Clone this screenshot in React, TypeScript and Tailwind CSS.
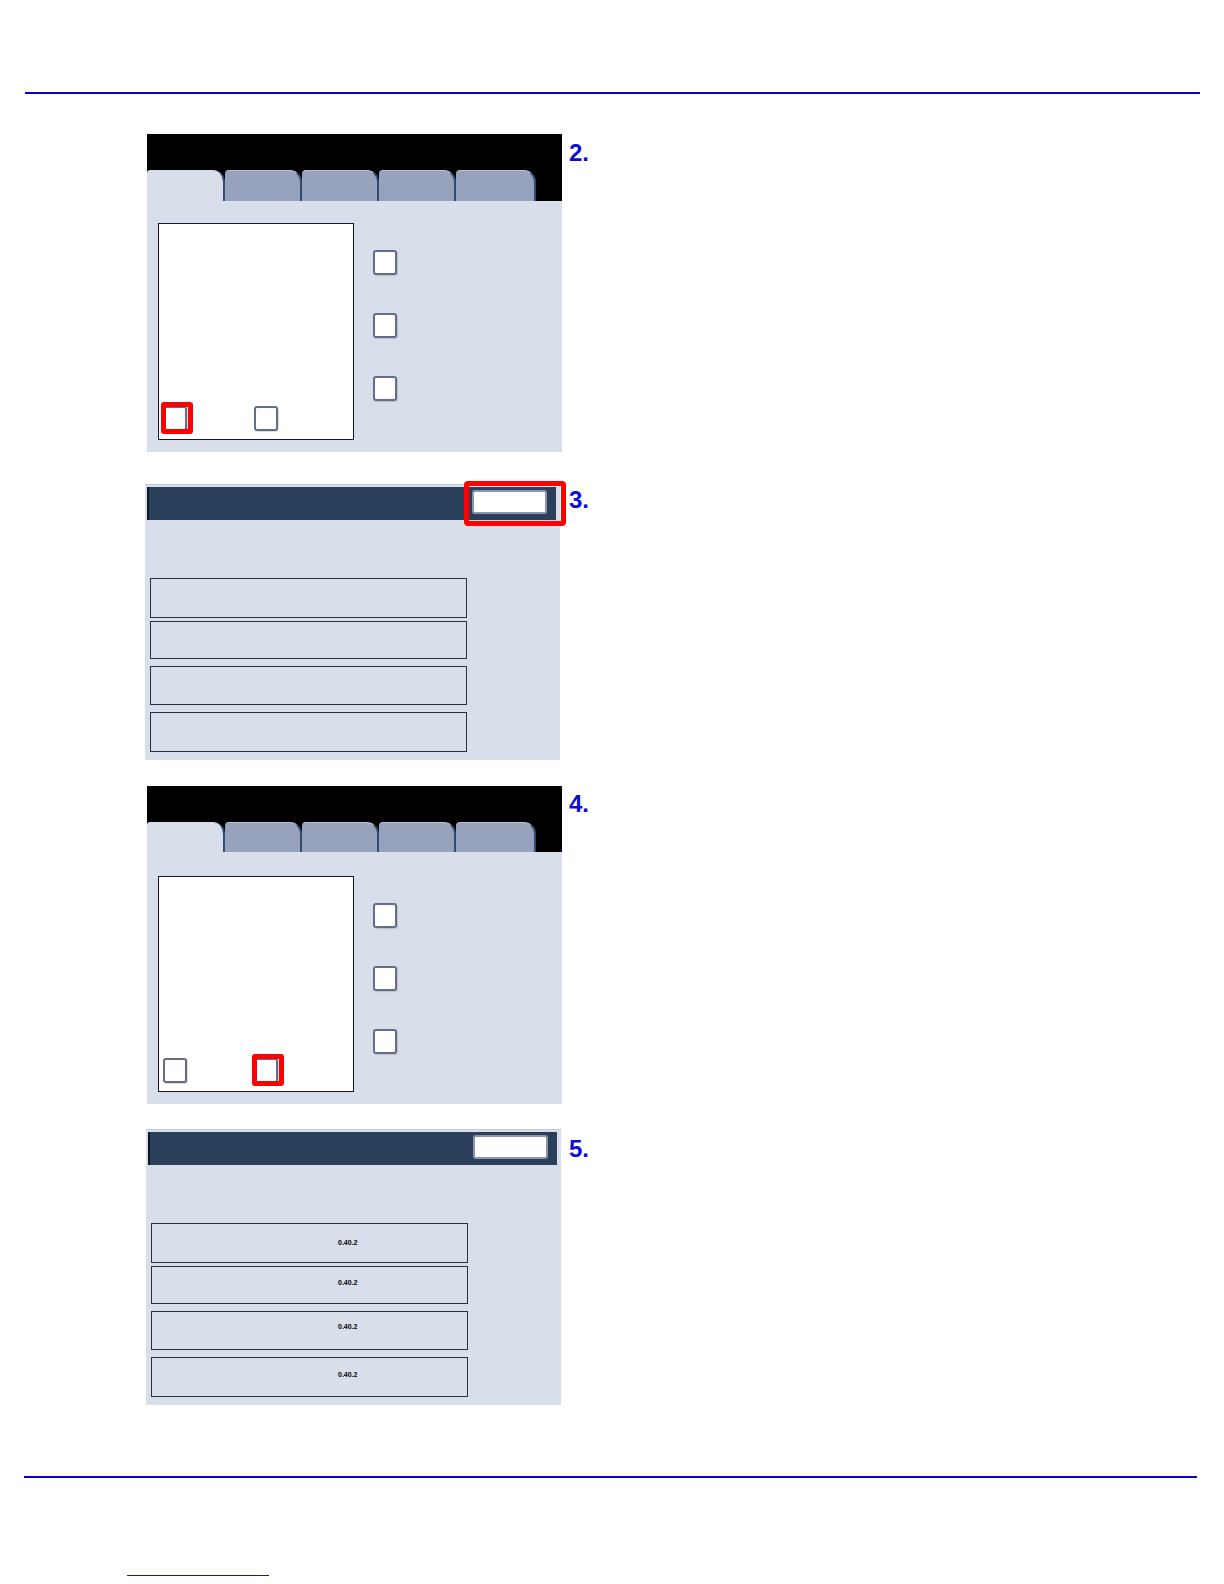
import React from "react";

type Side = "left" | "right";

const Checkbox = ({ marked = false }: { marked?: boolean }) => (
  <div className="relative w-[24px] h-[25px]">
    <div className="w-full h-full rounded-[3px] border-2 border-[#656d8c] bg-white shadow-[1px_1px_1px_rgba(0,0,0,0.15)]" />
    {/* Red call-out drawn over the checkbox */}
    {marked && (
      <div className="absolute -left-[2px] -top-[4px] w-[32px] h-[32px] rounded-[3px] border-[5px] border-[#ff0000]" />
    )}
  </div>
);

const tabClasses = ["w-[77px]", "w-[77px]", "w-[77px]", "w-[80px]"];

interface TabPanelProps {
  tabH: string;
  bodyH: string;
  boxTop: string;
  boxH: string;
  marked: Side;
}

const TabPanel = ({ tabH, bodyH, boxTop, boxH, marked }: TabPanelProps) => (
  <div className="w-[415px] bg-black pt-[36px]">
    {/* Tab strip */}
    <div className={`flex ${tabH}`}>
      <div className="w-[78px] h-full bg-[#d8deea] rounded-tl-[3px] rounded-tr-[12px] border-r-2 border-[#2f4d75]" />
      {tabClasses.map((w, i) => (
        <div
          key={i}
          className={`${w} h-full bg-[#97a2bc] rounded-tl-[4px] rounded-tr-[12px] border-t border-[#b9c2d4] border-r-2 border-r-[#2f4d75]`}
        />
      ))}
    </div>

    {/* Body */}
    <div className={`flex bg-[#d8deea] pl-[11px] ${bodyH} ${boxTop}`}>
      <div className={`w-[196px] ${boxH} bg-white border border-[#14143c] flex items-end gap-[67px] pl-[4px] pb-[8px]`}>
        <Checkbox marked={marked === "left"} />
        <Checkbox marked={marked === "right"} />
      </div>
      <div className="ml-[19px] mt-[27px] flex flex-col gap-[38px]">
        <Checkbox />
        <Checkbox />
        <Checkbox />
      </div>
    </div>
  </div>
);

const rows = [
  { h: "h-[40px]", mt: "mt-0", pb: "pb-[2px]" },
  { h: "h-[38px]", mt: "mt-[3px]", pb: "pb-[5px]" },
  { h: "h-[39px]", mt: "mt-[7px]", pb: "pb-[8px]" },
  { h: "h-[40px]", mt: "mt-[7px]", pb: "pb-[5px]" },
];

const HeaderPanel = ({ marked = false, label }: { marked?: boolean; label?: string }) => (
  <div className="relative w-[415px] h-[276px] bg-[#d8deea] pt-[2px] pl-[2px] pr-[4px] border-t border-[#c3ccdb]">
    <div className="h-[33px] bg-[#2a3f59] border-l-2 border-[#0d1624] flex justify-end items-start pt-[3px] pr-[9px]">
      <div className="w-[75px] h-[24px] rounded-[3px] bg-white border-2 border-[#8b94aa]" />
    </div>
    <div className="mt-[58px] pl-[3px] flex flex-col">
      {rows.map((r, i) => (
        <div
          key={i}
          className={`w-[317px] ${r.h} ${r.mt} border-[1.5px] border-[#2b3142] bg-[#d8deea] flex items-center pl-[186px] ${label ? r.pb : ""}`}
        >
          {label && <span className="text-[7px] font-bold text-black leading-none">{label}</span>}
        </div>
      ))}
    </div>
    {marked && (
      <div className="absolute left-[319px] -top-[4px] w-[102px] h-[45px] rounded-[4px] border-[5px] border-[#ff0000]" />
    )}
  </div>
);

const StepLabel = ({ n, top }: { n: number; top: string }) => (
  <div className={`${top} text-[24px] leading-none font-bold text-[#0b0bd6]`}>{n}.</div>
);

export default function App() {
  return (
    <div className="min-h-[1584px] bg-white pt-[92px] font-['Liberation_Sans',Arial,sans-serif]">
      <div className="ml-[25px] w-[1175px] h-[2px] bg-[#0000c8]" />

      <div className="pl-[145px]">
        {/* Step 2 */}
        <div className="mt-[40px] flex">
          <div className="w-[424px] pl-[2px]">
            <TabPanel tabH="h-[31px]" bodyH="h-[251px]" boxTop="pt-[22px]" boxH="h-[217px]" marked="left" />
          </div>
          <StepLabel n={2} top="mt-[7px]" />
        </div>

        {/* Step 3 */}
        <div className="mt-[32px] flex">
          <div className="w-[424px]">
            <HeaderPanel marked />
          </div>
          <StepLabel n={3} top="mt-[4px]" />
        </div>

        {/* Step 4 */}
        <div className="mt-[26px] flex">
          <div className="w-[424px] pl-[2px]">
            <TabPanel tabH="h-[30px]" bodyH="h-[252px]" boxTop="pt-[24px]" boxH="h-[216px]" marked="right" />
          </div>
          <StepLabel n={4} top="mt-[6px]" />
        </div>

        {/* Step 5 */}
        <div className="mt-[25px] flex">
          <div className="w-[424px] pl-[1px]">
            <HeaderPanel label="0.40.2" />
          </div>
          <StepLabel n={5} top="mt-[8px]" />
        </div>
      </div>

      <div className="mt-[71px] ml-[24px] w-[1173px] h-[2px] bg-[#0000d0]" />
      <div className="mt-[97px] ml-[127px] w-[142px] h-px bg-[#1a1a9a]" />
    </div>
  );
}
